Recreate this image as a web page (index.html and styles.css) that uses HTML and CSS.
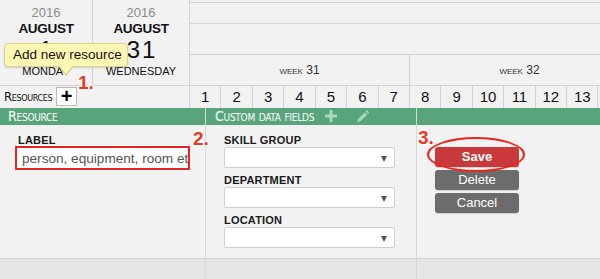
FILE: index.html
```html
<!DOCTYPE html>
<html lang="en">
<head>
<meta charset="UTF-8" />
<meta name="viewport" content="width=device-width, initial-scale=1" />
<title>Resource planner</title>
<link rel="stylesheet" href="styles.css">
</head>
<body>

<div class="top">
  <div class="date-col first">
    <div class="year">2016</div>
    <div class="month">AUGUST</div>
    <div class="daynum">1</div>
    <div class="weekday">MONDAY</div>
  </div>
  <div class="date-col second">
    <div class="year">2016</div>
    <div class="month">AUGUST</div>
    <div class="daynum">31</div>
    <div class="weekday">WEDNESDAY</div>
  </div>
  <div class="timeline">
    <div class="row1"></div>
    <div class="row2"></div>
    <div class="weeks">
      <div class="week">week 31</div>
      <div class="week">week 32</div>
    </div>
  </div>
</div>

<div class="days-row">
  <div class="res-head">
    <span class="caps res-title">Resources</span>
    <span class="add-btn">+</span>
  </div>
  <div class="day">1</div>
  <div class="day">2</div>
  <div class="day">3</div>
  <div class="day">4</div>
  <div class="day">5</div>
  <div class="day">6</div>
  <div class="day">7</div>
  <div class="day">8</div>
  <div class="day">9</div>
  <div class="day">10</div>
  <div class="day">11</div>
  <div class="day">12</div>
  <div class="day">13</div>
  <div class="day"></div>
</div>

<div class="green-bar">
  <div class="g-col caps">Resource</div>
  <div class="g-col caps">
    Custom data fields
    <svg class="g-icon plus-icon" width="14" height="14" viewBox="0 0 14 14">
      <path d="M7 1 V13 M1 7 H13" stroke="#a9d9bb" stroke-width="3" fill="none" />
    </svg>
    <svg class="g-icon pencil-icon" width="14" height="14" viewBox="0 0 14 14">
      <path d="M1 13.5 L2.2 10 L8.8 3.4 L11.1 5.7 L4.5 12.3 Z" fill="#a9d9bb" />
      <path d="M9.6 2.6 L10.9 1.3 L13.2 3.6 L11.9 4.9 Z" fill="#a9d9bb" />
    </svg>
  </div>
  <div class="g-col"></div>
</div>

<div class="panel">
  <div class="p-col col-label">
    <div class="field-label">LABEL</div>
    <div class="text-input">person, equipment, room et</div>
  </div>
  <div class="p-col col-fields">
    <div class="field-label">SKILL GROUP</div>
    <div class="select"></div>
    <div class="field-label">DEPARTMENT</div>
    <div class="select"></div>
    <div class="field-label">LOCATION</div>
    <div class="select"></div>
  </div>
  <div class="p-col col-actions">
    <div class="btn save">Save</div>
    <div class="btn">Delete</div>
    <div class="btn">Cancel</div>
  </div>
</div>

<div class="footer">
  <div class="f-col"></div>
  <div class="f-col"></div>
  <div class="f-col"></div>
</div>

<!-- help overlays -->
<div class="tooltip">Add new resource</div>
<div class="mark m1">1.</div>
<div class="mark m2">2.</div>
<div class="mark m3">3.</div>
<div class="ring"></div>

</body>
</html>
```

FILE: styles.css
```css
body { margin: 0; width: 600px; height: 279px; overflow: hidden; position: relative; background: #f2f2f2; font-family: "Liberation Sans", Arial, sans-serif; color: #222; }

/* header with dates and weeks */
.top { display: flex; height: 86px; box-sizing: border-box; border-bottom: 1px solid #d3d3d3; }
.date-col { flex-shrink: 0; box-sizing: border-box; border-right: 1px solid #d3d3d3; text-align: center; padding-top: 6px; }
.date-col.first { width: 93px; }
.date-col.second { width: 97px; }
.year { font-size: 13px; line-height: 14px; color: #8a8a8a; }
.month { font-size: 13.5px; line-height: 14px; font-weight: bold; letter-spacing: -0.3px; margin-top: 2px; color: #111; }
.daynum { font-size: 24px; line-height: 24px; letter-spacing: 2px; padding-left: 2px; margin-top: 2px; color: #111; }
.weekday { font-size: 11px; line-height: 12px; margin-top: 3px; color: #111; }

.timeline { flex: 1; display: flex; flex-direction: column; overflow: hidden; }
.row1 { margin-top: 2px; height: 22px; box-sizing: border-box; border-top: 1px solid #d3d3d3; border-bottom: 1px solid #d3d3d3; }
.row2 { height: 31px; box-sizing: border-box; border-bottom: 1px solid #d3d3d3; }
.weeks { flex: 1; display: flex; }
.week { flex-shrink: 0; width: 220px; box-sizing: border-box; border-right: 1px solid #d3d3d3; display: flex; align-items: center; justify-content: center; font-size: 12px; font-variant: small-caps; color: #333; }

/* day numbers */
.days-row { display: grid; grid-template-columns: 190px repeat(14, 31.43px); height: 22px; overflow: hidden; }
.res-head { display: flex; align-items: flex-start; padding-left: 4px; border-right: 1px solid #d3d3d3; }
.day { box-sizing: border-box; border-right: 1px solid #d3d3d3; text-align: center; font-size: 15px; line-height: 22px; color: #111; }
.caps { font-family: "DejaVu Sans Condensed", "DejaVu Sans", sans-serif; font-stretch: condensed; font-variant: small-caps; }
.res-title { width: 52px; font-size: 13px; letter-spacing: -0.4px; line-height: 22px; color: #111; }
.add-btn { margin-top: 1px; width: 21px; height: 19px; box-sizing: border-box; background: #fff; border: 1px solid #b9b9b9; text-align: center; font-size: 20px; font-weight: bold; line-height: 17px; color: #000; }

/* green section bar */
.green-bar { display: grid; grid-template-columns: 206px 211px 1fr; height: 17px; background: #59a57b; }
.g-col { box-sizing: border-box; border-right: 1px solid #c7e3d1; padding-left: 8px; color: #fff; font-size: 14px; letter-spacing: -0.25px; line-height: 17px; white-space: nowrap; }
.g-col:nth-child(2) { padding-left: 9px; }
.g-col:last-child { border-right: none; }
.g-icon { vertical-align: -2px; }
.plus-icon { margin-left: 6px; }
.pencil-icon { margin-left: 14px; }

/* edit panel */
.panel { display: grid; grid-template-columns: 206px 211px 1fr; height: 133px; }
.p-col { box-sizing: border-box; border-right: 1px solid #cddfd5; padding-top: 9px; }
.p-col:last-child { border-right: none; }
.col-label { padding-left: 18px; }
.col-fields { padding-left: 18px; }
.col-actions { padding-left: 18px; padding-top: 22px; }
.field-label { font-size: 11px; font-weight: bold; line-height: 12px; color: #1a1a1a; letter-spacing: 0.2px; }
.text-input { margin-left: -3px; width: 175px; height: 24px; box-sizing: border-box; border: 2px solid #e8231b; box-shadow: 0 0 0 1px #fff; background: #fff; padding: 1px 0 0 5px; font-size: 13.6px; line-height: 19px; color: #555; white-space: nowrap; overflow: hidden; }
.select { position: relative; width: 171px; height: 21px; box-sizing: border-box; margin: 1px 0 6px; background: #fff; border: 1px solid #cfcfcf; border-radius: 2px; }
.select::after { content: ""; position: absolute; right: 7px; top: 8px; border-left: 3.5px solid transparent; border-right: 3.5px solid transparent; border-top: 6px solid #555; }
.btn { width: 84px; height: 20px; margin-bottom: 3px; border-radius: 3px; background: #6c6c6c; color: #fff; font-size: 13px; line-height: 20px; text-align: center; box-shadow: 0 1px 1px rgba(0,0,0,0.15); }
.btn.save { background: #c8393b; font-weight: bold; }

.footer { display: grid; grid-template-columns: 206px 211px 1fr; height: 21px; box-sizing: border-box; border-top: 1px solid #d6d6d6; background: #e5e5e5; }
.f-col { border-right: 1px solid #cddfd5; }
.f-col:last-child { border-right: none; }

/* overlays */
.tooltip { position: absolute; left: 4px; top: 43px; width: 124px; height: 24px; box-sizing: border-box; padding-left: 8px; background: #fdf7b4; border: 1px solid #ddd38e; border-radius: 4px; box-shadow: 0 1px 2px rgba(0,0,0,0.15); font-size: 13.5px; line-height: 22px; color: #111; }
.tooltip::before { content: ""; position: absolute; left: 53px; top: 100%; border-left: 8px solid transparent; border-right: 8px solid transparent; border-top: 10px solid #ddd38e; }
.tooltip::after { content: ""; position: absolute; left: 54px; top: 100%; margin-top: -1px; border-left: 7px solid transparent; border-right: 7px solid transparent; border-top: 9px solid #fdf7b4; }
.mark { position: absolute; font-size: 19px; font-weight: bold; line-height: 19px; color: #f03322; text-shadow: 1px 1px 0 #fff, -1px -1px 0 #fff, 1px -1px 0 #fff, -1px 1px 0 #fff, 0 0 3px #fff; }
.m1 { left: 78px; top: 73px; }
.m2 { left: 193px; top: 129px; }
.m3 { left: 418px; top: 128px; }
.ring { position: absolute; left: 427px; top: 137px; width: 98px; height: 35px; box-sizing: border-box; border: 2.5px solid #e8261c; border-radius: 50%; }
```
